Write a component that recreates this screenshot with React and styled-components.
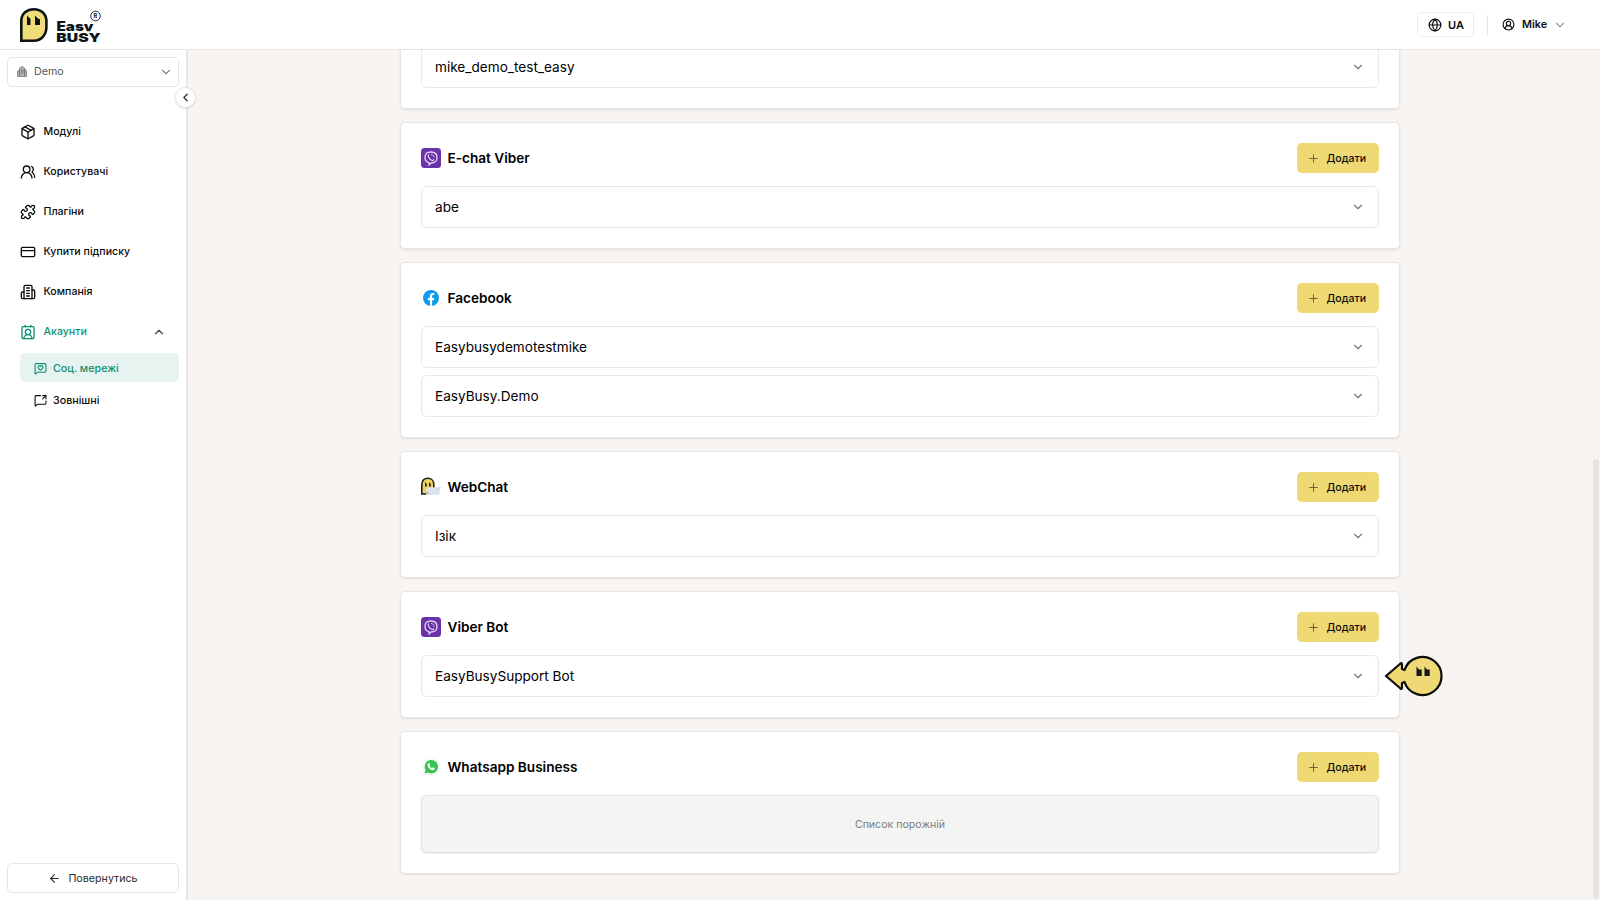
import React from "react";
import styled, { createGlobalStyle, css } from "styled-components";
import {
  ArrowLeft, ChevronDown, ChevronLeft, ChevronUp, CircleUserRound, ContactRound, CreditCard, Globe,
  MessageSquareHeart, MessageSquareShare, Package, Plus, Puzzle, UsersRound,
} from "lucide-react";

const GlobalStyle = createGlobalStyle`
  *, *::before, *::after { box-sizing: border-box; }
  body { margin: 0; overflow: hidden; font-family: Inter, "Liberation Sans", sans-serif; color: #0c0c0c; }
  button { font-family: inherit; color: inherit; margin: 0; }
  svg { display: block; flex-shrink: 0; }
`;

const Page = styled.div`
  display: flex;
  flex-direction: column;
  width: 1600px;
  height: 900px;
  background: #fff;
`;

const Header = styled.header`
  display: flex;
  align-items: center;
  justify-content: space-between;
  height: 50px;
  flex-shrink: 0;
  padding: 0 33px 0 19px;
  border-bottom: 1px solid #e4e4e4;
`;

const HeaderActions = styled.div`
  display: flex;
  align-items: center;
`;

const LanguageButton = styled.button`
  display: flex;
  align-items: center;
  gap: 6px;
  width: 57px;
  height: 25px;
  padding: 0 0 0 10px;
  border: 1px solid #ececec;
  border-radius: 5px;
  background: #fff;
  font-size: 11px;
  font-weight: 600;
`;

const Divider = styled.span`
  width: 1px;
  height: 20px;
  margin: 0 14px 0 13px;
  background: #e6e6e6;
`;

const UserButton = styled.button`
  display: flex;
  align-items: center;
  width: 65px;
  padding: 0;
  border: 0;
  background: none;
  font-size: 10.8px;
  font-weight: 600;

  span { margin: 0 auto 0 7px; }
`;

const Body = styled.div`
  display: flex;
  flex: 1;
  min-height: 0;
`;

const Sidebar = styled.aside`
  position: relative;
  z-index: 1;
  display: flex;
  flex-direction: column;
  width: 188px;
  flex-shrink: 0;
  padding: 7px 7px 7px;
  border-right: 2px solid #e7e7ea;
  background: #fff;
`;

const outlined = css`
  display: flex;
  align-items: center;
  width: 172px;
  height: 30px;
  border: 1px solid #e6e6e6;
  border-radius: 5px;
  background: #fff;
  font-size: 10.7px;
`;

const CompanySelect = styled.button`
  ${outlined}
  gap: 7px;
  padding: 0 5px 1px 9px;
  color: #555;

  span { flex: 1; text-align: left; }
`;

const BackButton = styled.button`
  ${outlined}
  justify-content: center;
  gap: 7px;
  margin-top: auto;
  padding: 0;
  color: #2c2c2c;
`;

const CollapseButton = styled.button`
  position: absolute;
  top: 37px;
  right: -10px;
  display: grid;
  place-items: center;
  width: 21px;
  height: 21px;
  padding: 0;
  border: 1px solid #e6e6e6;
  border-radius: 50%;
  background: #fff;
  box-shadow: 0 1px 2px rgba(0, 0, 0, 0.12);
`;

const Nav = styled.nav`
  display: flex;
  flex-direction: column;
  margin-top: 24px;
`;

const NavItem = styled.a`
  display: flex;
  align-items: center;
  gap: 7.5px;
  height: 40px;
  padding: 1px 13px 0 13px;
  font-size: 10.6px;
  font-weight: 500;
  color: ${(p) => (p.$active ? "#0d8f70" : "#0c0c0c")};

  span { flex: 1; }
`;

const SubNavItem = styled.a`
  display: flex;
  align-items: center;
  gap: 6.5px;
  height: 29px;
  margin: ${(p) => (p.$active ? "2px 0 4px 13px" : "0 0 0 13px")};
  padding: ${(p) => (p.$active ? "1px 0 0 13.5px" : "0 0 0 13.5px")};
  border-radius: 5px;
  font-size: 10.7px;
  font-weight: 500;
  color: ${(p) => (p.$active ? "#0d8f70" : "#0c0c0c")};
  background: ${(p) => (p.$active ? "#e6f3f0" : "transparent")};
`;

const Main = styled.main`
  position: relative;
  display: flex;
  flex-direction: column;
  justify-content: flex-end;
  align-items: center;
  gap: 13px;
  flex: 1;
  overflow: hidden;
  padding: 0 0 26px 12px;
  background: #f8f4f1;
`;

const Card = styled.section`
  width: 1000px;
  flex-shrink: 0;
  padding: 20px;
  border: 1px solid #e6e6e8;
  border-radius: 5px;
  background: #fff;
  box-shadow: 0 1px 2px rgba(0, 0, 0, 0.1);
`;

const CardHeader = styled.div`
  display: flex;
  align-items: center;
  gap: 6.5px;
  height: 30px;
  margin-bottom: 13px;
`;

const CardTitle = styled.h2`
  flex: 1;
  margin: 0;
  font-size: 13.6px;
  font-weight: 600;
  color: #000;
`;

const AddButton = styled.button`
  display: flex;
  align-items: center;
  gap: 6.5px;
  width: 82px;
  height: 30px;
  padding: 0 0 0 10px;
  border: 0;
  border-radius: 5px;
  background: #efd974;
  font-size: 10.6px;
  font-weight: 500;
`;

const AccountList = styled.div`
  display: flex;
  flex-direction: column;
  gap: 7px;
`;

const AccountRow = styled.div`
  display: flex;
  align-items: center;
  justify-content: space-between;
  height: 42px;
  padding: 0 13px;
  border: 1px solid #e9e9e9;
  border-radius: 6px;
  font-size: 13.6px;
  color: #000;
`;

const EmptyList = styled.div`
  display: grid;
  place-items: center;
  height: 58px;
  border: 1px solid #e2e2e2;
  border-radius: 5px;
  background: #f4f4f4;
  box-shadow: 0 1px 1px rgba(0, 0, 0, 0.06);
  font-size: 10.6px;
  color: #7d7d7d;
`;

const ScrollThumb = styled.div`
  position: absolute;
  right: 1px;
  bottom: 1px;
  width: 6px;
  height: 440px;
  border-radius: 3px;
  background: #e4e4e4;
`;

const Mascot = styled.svg`
  position: absolute;
  left: 1195px;
  top: 604px;
`;

const Logo = () => (
  <svg width="84" height="42" viewBox="0 0 84 42">
    <clipPath id="logo-line"><rect x="36" y="10" width="46" height="17.200" /></clipPath>
    <path d="M2.300 36.800V17C2.300 9.500 8 5.200 15 5.200S27.400 10 27.400 17v6C27.400 31 22 36.800 15 36.800Z" fill="#f0dc78" stroke="#0c1418" strokeWidth="2.600" />
    <path d="M8 11.500l3.500 3.500v6H8zM16 11.500l3.500 3.500H21v6h-5z" fill="#0c1418" />
    <g fill="#0c1418" fontFamily="Inter" fontWeight="900">
      <text x="37.500" y="27" fontSize="12.500" textLength="37" lengthAdjust="spacingAndGlyphs" clipPath="url(#logo-line)">Easy</text>
      <text x="37.300" y="37.800" fontSize="12.300" textLength="44.500" lengthAdjust="spacingAndGlyphs">BUSY</text>
      <text x="74.600" y="14" fontSize="5.500" fontWeight="700">R</text>
    </g>
    <circle cx="76.500" cy="12" r="4.800" fill="none" stroke="#0c1418" strokeWidth=".9" />
  </svg>
);

const BuildingIcon = () => (
  <svg width="16" height="16" viewBox="0 0 24 24" fill="none" stroke="currentColor" strokeWidth="2" strokeLinecap="round" strokeLinejoin="round">
    <path d="M6 22V4a2 2 0 0 1 2-2h8a2 2 0 0 1 2 2v18Z" />
    <path d="M6 12H4a2 2 0 0 0-2 2v6a2 2 0 0 0 2 2h2M18 9h2a2 2 0 0 1 2 2v9a2 2 0 0 1-2 2h-2M10 6h4M10 10h4M10 14h4M10 18h4" />
  </svg>
);

const CompanyIcon = () => (
  <svg width="10" height="11" viewBox="0 0 10 11" fill="#b5b5b5" stroke="#777" strokeWidth=".8" strokeLinejoin="round">
    <path d="M.500 5.200 2.500 4v6.500h-2zM7.500 3l2 1.500v6h-2zM2.500 2 5 .500 7.500 2v8.500h-5zM4.300 3v5M5.900 3v5" />
  </svg>
);

const ViberIcon = () => (
  <svg width="20" height="20" viewBox="0 0 20 20">
    <rect width="20" height="20" rx="3.500" fill="#6a34a8" />
    <g fill="none" stroke="#e4d7f2" strokeLinecap="round" strokeLinejoin="round">
      <path d="M10 4c4.200 0 6 1.500 6 5.500s-1.800 5.500-6 5.500L8 17v-2.300C5.100 14 4 12.500 4 9.500 4 5.500 5.800 4 10 4Z" strokeWidth="1.300" />
      <path d="M7.500 6.900c-.5.500-.3 1.500.3 2.600.8 1.400 1.800 2.400 3.300 3 .7.300 1.200-.2 1.500-.8" strokeWidth="1.200" />
      <path d="M10.300 6.500c1.700.1 2.700 1.100 2.800 2.800" strokeWidth=".8" />
    </g>
  </svg>
);

const FacebookIcon = () => (
  <svg width="20" height="20" viewBox="0 0 20 20">
    <circle cx="10" cy="10" r="8" fill="#0f9af0" />
    <path d="M8.900 18v-5.700H6.900V10h2V8.300c0-2 1.200-3.200 3-3.200.7 0 1.400.1 1.400.1v1.900h-1c-.9 0-1.200.6-1.200 1.200V10h2.200l-.4 2.300h-1.800V18Z" fill="#fff" />
  </svg>
);

const WebChatIcon = () => (
  <svg width="20" height="20" viewBox="0 0 20 20">
    <path d="M.800 17V7.500C.800 3.500 3.300 1.300 6.800 1.300s6 2.500 6 6.200V12l-4 5Z" fill="#ecd45e" stroke="#171b1c" strokeWidth="1.500" />
    <path d="M4.100 5 5.800 7v2.600H4.100zM8.100 5 9.800 7v2.600H8.100z" fill="#171b1c" />
    <path d="M5.500 10.800 19.700 9.800 18.300 17.800 5 18Z" fill="#dce2ef" />
    <circle cx="17" cy="12" r=".7" fill="#b6b695" />
    <circle cx="6.400" cy="15.800" r=".8" fill="#8f937c" />
  </svg>
);

const WhatsappIcon = () => (
  <svg width="20" height="20" viewBox="0 0 20 20">
    <path d="M1.700 18 3 13.800A8.200 8.200 0 1 1 6.300 17Z" fill="#fff" stroke="#e8f0ea" strokeWidth=".8" />
    <path d="m3.500 16.500 1-3.500a6.700 6.700 0 1 1 2.500 2.500Z" fill="#37c351" />
    <path d="M7.400 6.200c.5-.4.900-.2 1.100.2l.6 1.400c.1.400-.6.900-.5 1.200.5 1 1.300 1.700 2.300 2.100.4.100.8-.9 1.200-.7l1.400.7c.5.300.2 1.200-.3 1.600-.9.800-2.200.5-3.700-.3-1.600-.9-2.700-2.400-3-3.900-.2-1 .2-1.900.9-2.300Z" fill="#fff" />
  </svg>
);

const NAV = [
  ["Модулі", Package],
  ["Користувачі", UsersRound],
  ["Плагіни", Puzzle],
  ["Купити підписку", CreditCard],
  ["Компанія", BuildingIcon],
];

const CHANNELS = [
  { title: "E-chat Viber", icon: ViberIcon, accounts: ["abe"] },
  { title: "Facebook", icon: FacebookIcon, accounts: ["Easybusydemotestmike", "EasyBusy.Demo"] },
  { title: "WebChat", icon: WebChatIcon, accounts: ["Ізік"] },
  { title: "Viber Bot", icon: ViberIcon, accounts: ["EasyBusySupport Bot"] },
  { title: "Whatsapp Business", icon: WhatsappIcon, accounts: [] },
];

const Account = ({ name }) => (
  <AccountRow>
    <span>{name}</span>
    <ChevronDown size={14} color="#777" />
  </AccountRow>
);

const Channel = ({ title, icon: Icon, accounts }) => (
  <Card>
    <CardHeader>
      <Icon />
      <CardTitle>{title}</CardTitle>
      <AddButton><Plus size={13} strokeWidth={1.6} color="#5c5530" />Додати</AddButton>
    </CardHeader>
    {accounts.length ? (
      <AccountList>{accounts.map((name) => <Account key={name} name={name} />)}</AccountList>
    ) : (
      <EmptyList>Список порожній</EmptyList>
    )}
  </Card>
);

export default function App() {
  return (
    <Page>
      <GlobalStyle />
      <Header>
        <Logo />
        <HeaderActions>
          <LanguageButton><Globe size={14} />UA</LanguageButton>
          <Divider />
          <UserButton>
            <CircleUserRound size={13} />
            <span>Mike</span>
            <ChevronDown size={14} strokeWidth={1.8} color="#777" />
          </UserButton>
        </HeaderActions>
      </Header>
      <Body>
        <Sidebar>
          <CompanySelect>
            <CompanyIcon />
            <span>Demo</span>
            <ChevronDown size={14} strokeWidth={1.8} />
          </CompanySelect>
          <CollapseButton><ChevronLeft size={13} strokeWidth={2.4} color="#333" /></CollapseButton>
          <Nav>
            {NAV.map(([label, Icon]) => (
              <NavItem key={label}><Icon size={16} /><span>{label}</span></NavItem>
            ))}
            <NavItem $active>
              <ContactRound size={16} />
              <span>Акаунти</span>
              <ChevronUp size={14} color="#444" />
            </NavItem>
            <SubNavItem $active><MessageSquareHeart size={13} />Соц. мережі</SubNavItem>
            <SubNavItem><MessageSquareShare size={13} />Зовнішні</SubNavItem>
          </Nav>
          <BackButton><ArrowLeft size={13} />Повернутись</BackButton>
        </Sidebar>
        <Main>
          <Card><Account name="mike_demo_test_easy" /></Card>
          {CHANNELS.map((channel) => <Channel key={channel.title} {...channel} />)}
          <ScrollThumb />
          <Mascot width="60" height="44" viewBox="0 0 60 44">
            <path d="M3 22 17.500 9.500c.8-.6 1.500-.3 1.500.7V15l2.500 1A19 19 0 1 1 21.500 28L19 29v4.800c0 1-.7 1.300-1.500.7Z" fill="#efd974" stroke="#0a0a0a" strokeWidth="2.200" strokeLinejoin="round" />
            <path d="m33.500 12.500 2.500 3h2.700v6.500h-5.200zM41.500 12.500l2.500 3h2.700v6.500h-5.200z" fill="#15191c" />
          </Mascot>
        </Main>
      </Body>
    </Page>
  );
}
